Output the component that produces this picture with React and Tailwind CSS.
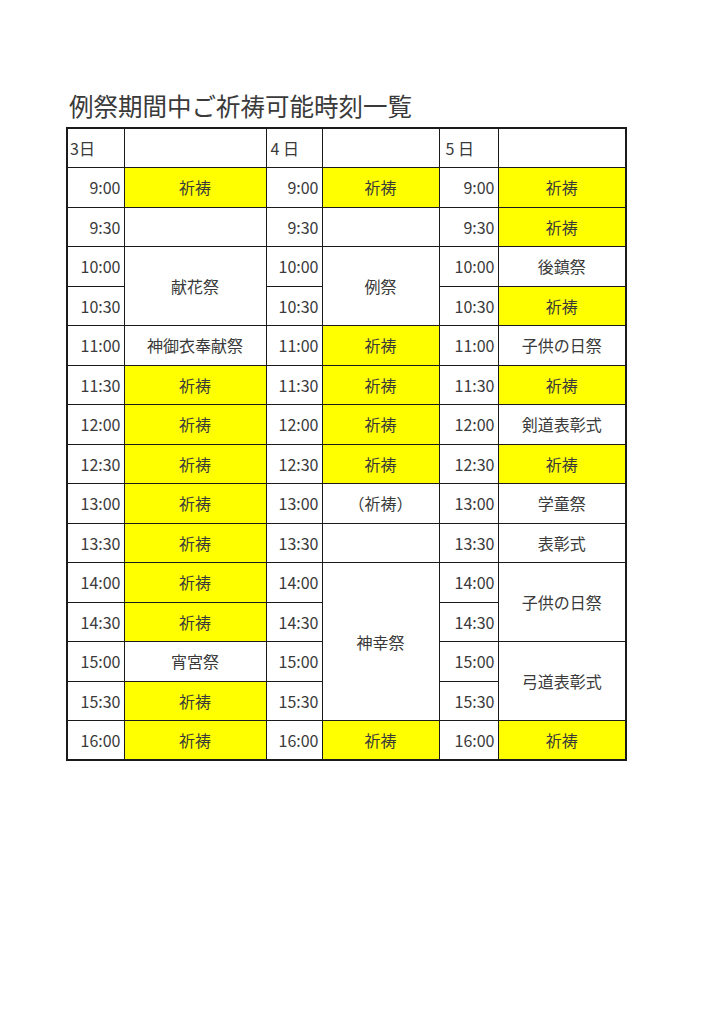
const times = ['9:00', '9:30', '10:00', '10:30', '11:00', '11:30', '12:00', '12:30', '13:00', '13:30', '14:00', '14:30', '15:00', '15:30', '16:00'];

// each day: list of events aligned to rows; null = covered by a rowspan above
const days = [
  [
    { y: true, t: '祈祷' },
    { t: '' },
    { t: '献花祭', span: 2 },
    null,
    { t: '神御衣奉献祭' },
    { y: true, t: '祈祷' },
    { y: true, t: '祈祷' },
    { y: true, t: '祈祷' },
    { y: true, t: '祈祷' },
    { y: true, t: '祈祷' },
    { y: true, t: '祈祷' },
    { y: true, t: '祈祷' },
    { t: '宵宮祭' },
    { y: true, t: '祈祷' },
    { y: true, t: '祈祷' },
  ],
  [
    { y: true, t: '祈祷' },
    { t: '' },
    { t: '例祭', span: 2 },
    null,
    { y: true, t: '祈祷' },
    { y: true, t: '祈祷' },
    { y: true, t: '祈祷' },
    { y: true, t: '祈祷' },
    { t: '（祈祷）' },
    { t: '' },
    { t: '神幸祭', span: 4 },
    null,
    null,
    null,
    { y: true, t: '祈祷' },
  ],
  [
    { y: true, t: '祈祷' },
    { y: true, t: '祈祷' },
    { t: '後鎮祭' },
    { y: true, t: '祈祷' },
    { t: '子供の日祭' },
    { y: true, t: '祈祷' },
    { t: '剣道表彰式' },
    { y: true, t: '祈祷' },
    { t: '学童祭' },
    { t: '表彰式' },
    { t: '子供の日祭', span: 2 },
    null,
    { t: '弓道表彰式', span: 2 },
    null,
    { y: true, t: '祈祷' },
  ],
];

const cell = 'border border-[#1a1a1a] p-0';

export default function App() {
  return (
    <div
      className="min-h-[1024px] w-[724px] bg-white text-[#3a3a3a]"
      style={{ fontFamily: '"Noto Sans CJK JP", "Noto Sans", sans-serif' }}
    >
      <div className="h-[127px] pl-[69px] pt-[88px]">
        <h1 className="text-[24.5px] leading-[36px] font-normal text-[#3a3a3a]">例祭期間中ご祈祷可能時刻一覧</h1>
      </div>
      <table className="ml-[66px] border-collapse border-2 border-[#1a1a1a] table-fixed text-[16px]">
        <colgroup>
          <col className="w-[57px]" />
          <col className="w-[142px]" />
          <col className="w-[56px]" />
          <col className="w-[117px]" />
          <col className="w-[59px]" />
          <col className="w-[128px]" />
        </colgroup>
        <tbody>
          <tr className="h-[39.5px]">
            <td className={`${cell} pl-[2px] text-left`}>3日</td>
            <td className={cell}></td>
            <td className={`${cell} pl-[4px] text-left`}>4 日</td>
            <td className={cell}></td>
            <td className={`${cell} pl-[6px] text-left`}>5 日</td>
            <td className={cell}></td>
          </tr>
          {times.map((time, i) => (
            <tr key={time} className="h-[39.5px]">
              {days.map((day, d) => {
                const ev = day[i];
                return [
                  <td key={`t${d}`} className={`${cell} pr-[3px] text-right`}>
                    {time}
                  </td>,
                  ev ? (
                    <td
                      key={`e${d}`}
                      rowSpan={ev.span || 1}
                      className={`${cell} text-center ${ev.y ? 'bg-[#ffff00]' : ''}`}
                    >
                      {ev.t}
                    </td>
                  ) : null,
                ];
              })}
            </tr>
          ))}
        </tbody>
      </table>
    </div>
  );
}
